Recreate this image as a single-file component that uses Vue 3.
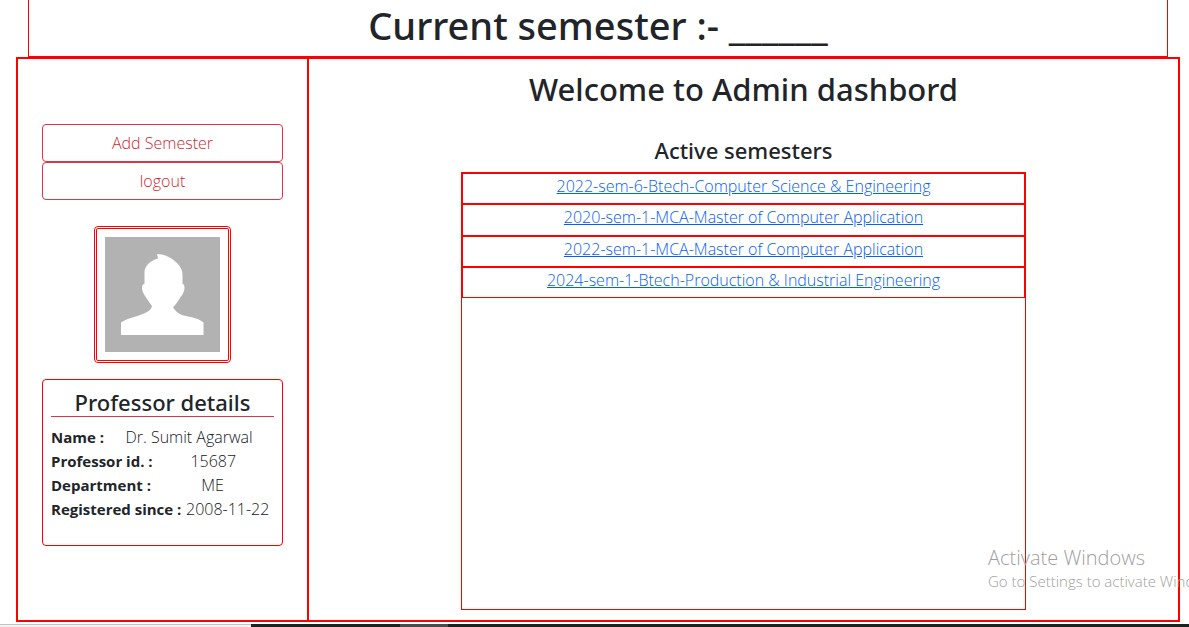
<script setup>
const semesters = [
  '2022-sem-6-Btech-Computer Science & Engineering',
  '2020-sem-1-MCA-Master of Computer Application',
  '2022-sem-1-MCA-Master of Computer Application',
  '2024-sem-1-Btech-Production & Industrial Engineering',
]
const details = [
  { label: 'Name :', value: 'Dr. Sumit Agarwal' },
  { label: 'Professor id. :', value: '15687' },
  { label: 'Department :', value: 'ME' },
  { label: 'Registered since :', value: '2008-11-22' },
]
</script>

<template>
  <div class="page">
    <header class="banner">
      <h1>Current semester :- ______</h1>
    </header>
    <div class="board">
      <aside class="sidebar">
        <nav class="actions">
          <button type="button">Add Semester</button>
          <button type="button">logout</button>
        </nav>
        <div class="avatar">
          <svg viewBox="0 0 115 115" role="img" aria-label="Profile photo">
            <rect width="115" height="115" fill="#b2b2b2" />
            <path
              fill="#fff"
              d="M52 17C60 17 67 21 72 26C76 30 77.500 34 77.500 38V47C79 47 79.500 48.500 79.500 51C79.500 55 77 58 75 61C72 66 70 68 68 70.500C71 75 75 78 81 79C87 80.500 93 81 98.500 85.500V98H16V85.500C22 81.500 28 80.500 35 78C43 75.500 46 73 47 69C44 65 42 62 40 59C38 56 37 53 37 51C37 48.500 38 47 39.500 47V35C39.500 30 44 24 53 21.500Z"
            />
          </svg>
        </div>
        <section class="card">
          <h3>Professor details</h3>
          <dl>
            <div v-for="d in details" :key="d.label" class="row">
              <dt>{{ d.label }}</dt>
              <dd>{{ d.value }}</dd>
            </div>
          </dl>
        </section>
      </aside>
      <main class="content">
        <h2>Welcome to Admin dashbord</h2>
        <h3>Active semesters</h3>
        <div class="list">
          <ul>
            <li v-for="s in semesters" :key="s"><a href="#">{{ s }}</a></li>
          </ul>
        </div>
      </main>
    </div>
    <div class="strip"><span class="light"></span><span class="dark"></span><span class="mid"></span><span class="dark rest"></span></div>
    <div class="watermark">
      <p class="big">Activate Windows</p>
      <p class="small">Go to Settings to activate Windows.</p>
    </div>
  </div>
</template>

<style>
body {
  margin: 0;
  background: #fff;
}
</style>

<style scoped>
* {
  box-sizing: border-box;
}
.page {
  position: relative;
  overflow: hidden;
  font-family: "Segoe UI", "Open Sans", "Noto Sans", sans-serif;
  font-size: 16px;
  font-weight: 300;
  line-height: 24px;
  color: #15181b;
}
h1, h2, h3, p, ul, dl, dd {
  margin: 0;
  padding: 0;
}
h1, h2, h3 {
  font-family: "Segoe UI", "Noto Sans", "Open Sans", sans-serif;
  font-weight: 500;
  color: #212529;
}
.banner {
  margin: 0 21px 0 28px;
  border: 1px solid #f00;
  border-top: 0;
  padding-bottom: 6px;
  text-align: center;
}
.banner h1 {
  font-size: 38px;
  line-height: 50px;
}
.board {
  display: grid;
  grid-template-columns: 1fr 3fr;
  margin: 0 9px 0 16px;
  border: 2px solid #f00;
}
.sidebar {
  border-right: 1px solid #f00;
  padding: 65px 24px 74px;
}
.actions {
  display: grid;
}
button {
  height: 38px;
  border: 1px solid #dc3545;
  border-radius: 4px;
  background: #fff;
  color: #d21f31;
  font: inherit;
}
.avatar {
  width: 137px;
  margin: 26px auto 16px;
  border: 3px double #f00;
  border-radius: 4px;
  padding: 8px;
}
.avatar svg {
  display: block;
  width: 100%;
}
.card {
  min-height: 167px;
  border: 1px solid #f00;
  border-radius: 4px;
  padding: 8px;
}
h3 {
  font-size: 22px;
  line-height: 28px;
  text-align: center;
}
.card h3 {
  border-bottom: 1px solid #dc3545;
  margin-bottom: 8px;
}
.row {
  display: flex;
}
dt {
  font-size: 15px;
  font-weight: 700;
  color: #212529;
}
dd {
  flex: 1;
  text-align: center;
}
.content {
  border-left: 1px solid #f00;
  text-align: center;
}
h2 {
  margin: 11px 0 28px;
  font-size: 31px;
  line-height: 38px;
}
.list {
  width: 65%;
  height: 438px;
  margin: 8px auto 10px;
  border: 1px solid #f00;
}
ul {
  display: grid;
  grid-auto-rows: 1fr;
  height: 125px;
  list-style: none;
}
li {
  border: 1px solid #f00;
}
a {
  color: #0560f5;
}
.strip {
  display: flex;
  height: 3px;
  margin-top: 2px;
}
.light {
  width: 251px;
  background: #f3f3f3;
  border-top: 1px solid #c0c4c0;
}
.dark {
  width: 149px;
  background: #1b2320;
}
.mid {
  width: 48px;
  background: #484c4a;
}
.rest {
  flex: 1;
}
.watermark {
  position: absolute;
  left: 988px;
  top: 544px;
  color: #a0a0a0;
  white-space: nowrap;
  pointer-events: none;
}
.big {
  font-size: 20px;
  line-height: 28px;
}
.small {
  font-size: 15px;
  line-height: 18px;
}
</style>
